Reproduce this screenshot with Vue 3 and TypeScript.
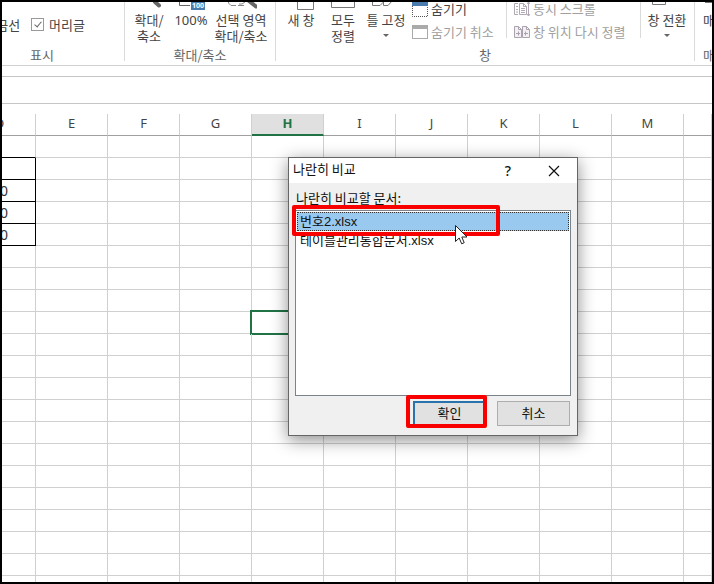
<script setup lang="ts">
import { ref } from 'vue'

const columns: string[] = ['D', 'E', 'F', 'G', 'H', 'I', 'J', 'K', 'L', 'M', '']
const rowCount = 21
const activeColumn = 'H'
const activeRow = 9
const values: Record<number, string> = { 2: '', 3: '0', 4: '0', 5: '0' }

const documents: string[] = ['번호2.xlsx', '테이블관리통합문서.xlsx']
const selected = ref(0)
const showHeadings = ref(true)

function cellClass(row: number, column: string) {
  return {
    boxed: column === 'D' && row in values,
    'above-box': column === 'D' && row === 1,
    active: column === activeColumn && row === activeRow,
  }
}
</script>

<template>
  <main class="frame">
    <header class="ribbon">
      <section class="group show">
        <div class="tools checks">
          <span>금선</span>
          <label class="check">
            <input v-model="showHeadings" type="checkbox" />
            <span>머리글</span>
          </label>
        </div>
        <div class="caption">표시</div>
      </section>

      <section class="group zoom">
        <div class="tools">
          <button class="tool">
            <svg width="32" height="10" viewBox="0 0 32 10"><path d="M22 0 L26 3.500" stroke="#666" stroke-width="4" stroke-linecap="round" /></svg>
            <span>확대/<br />축소</span>
          </button>
          <button class="tool">
            <svg width="32" height="10" viewBox="0 0 32 10">
              <path d="M4.500 0 V3.500 H15" fill="none" stroke="#666" />
              <rect x="16" y="0" width="14" height="8" fill="#4a7dae" />
              <text x="23" y="6" text-anchor="middle" class="badge">100</text>
            </svg>
            <span class="percent">100%</span>
          </button>
          <button class="tool wide">
            <svg width="32" height="10" viewBox="0 0 32 10">
              <path d="M3.500 0 V1 L6 3.500 H11 M13 3.500 H19 M14 2 H17 L20 0" fill="none" stroke="#888" />
              <path d="M24 -1 L31 4.500" stroke="#666" stroke-width="4" stroke-linecap="round" />
            </svg>
            <span>선택 영역<br />확대/축소</span>
          </button>
        </div>
        <div class="caption">확대/축소</div>
      </section>

      <section class="group window">
        <div class="tools">
          <button class="tool">
            <svg width="32" height="10" viewBox="0 0 32 10"><path d="M12.500 -1 V7.500 H28.500 V-1" fill="none" stroke="#777" /></svg>
            <span>새 창</span>
          </button>
          <button class="tool">
            <svg width="32" height="10" viewBox="0 0 32 10"><path d="M4.500 -1 V5.500 H27.500 V-1" fill="none" stroke="#777" /></svg>
            <span>모두<br />정렬</span>
          </button>
          <button class="tool freeze">
            <svg width="32" height="10" viewBox="0 0 32 10"><path d="M2.500 -1 V3.500 H10 L13.500 0 V3.500 H18 L22 -1" fill="none" stroke="#777" /></svg>
            <span>틀 고정</span>
            <i class="arrow"></i>
          </button>
          <div class="stack hide">
            <button class="line">
              <svg width="16" height="16" viewBox="0 0 16 16">
                <rect width="16" height="5" fill="#4a7dae" />
                <path d="M.5 5 V15.500 H15.500 V5" fill="none" stroke="#555" stroke-dasharray="1 1" />
              </svg>
              <span>숨기기</span>
            </button>
            <button class="line" disabled>
              <svg width="16" height="16" viewBox="0 0 16 16">
                <rect x=".5" y="1.500" width="15" height="13" fill="#fff" stroke="#aaa" />
                <rect y="1" width="16" height="4" fill="#aaa" />
              </svg>
              <span>숨기기 취소</span>
            </button>
          </div>
          <div class="stack sync">
            <button class="line" disabled>
              <svg width="16" height="16" viewBox="0 0 16 16" fill="none" stroke="#b0a8b4">
                <path d="M4 2.500 H.5 V13.500 H4 M2 5.500 H4 M2 8.500 H4 M2 11 H4" />
                <path d="M5.500 2.500 H9.500 L12.500 5.500 V13.500 H5.500 Z M9.500 2.500 V5.500 H12.500 M7 7.500 H11 M7 9.500 H11 M7 11.500 H11" />
                <path d="M14.500 1 V15 M13 13 L14.500 15 L16 13 M13 3 L14.500 1 L16 3" />
              </svg>
              <span>동시 스크롤</span>
            </button>
            <button class="line" disabled>
              <svg width="16" height="16" viewBox="0 0 16 16" fill="#f4eff5" stroke="#aaa2ae">
                <path d="M.5 2.500 H4.500 L7.500 5.500 V13.500 H.5 Z M4.500 2.500 V5.500 H7.500" />
                <path d="M8.500 2.500 H12.500 L15.500 5.500 V13.500 H8.500 Z M12.500 2.500 V5.500 H15.500" />
                <path d="M2 9.500 H6 M4.500 7.500 V11.500 M10 9.500 H14 M11.500 7.500 V11.500" />
              </svg>
              <span>창 위치 다시 정렬</span>
            </button>
          </div>
          <button class="tool switch">
            <svg width="32" height="10" viewBox="0 0 32 10"><path d="M1.500 -1 V2.500 H14.500 V-1" fill="none" stroke="#777" /></svg>
            <span>창 전환</span>
            <i class="arrow"></i>
          </button>
        </div>
        <div class="caption">창</div>
      </section>

      <section class="group macro">
        <div class="tools">
          <button class="tool">
            <svg width="12" height="10" viewBox="0 0 12 10"><path d="M2 .5 H12" stroke="#777" /></svg>
            <span>매</span>
          </button>
        </div>
        <div class="caption">매</div>
      </section>
    </header>

    <div class="gap"></div>
    <div class="formula"></div>

    <table class="sheet">
      <thead>
        <tr>
          <th v-for="c in columns" :key="c" :class="{ first: c === 'D', last: c === '', current: c === activeColumn }">{{ c }}</th>
        </tr>
      </thead>
      <tbody>
        <tr v-for="r in rowCount" :key="r">
          <td v-for="c in columns" :key="c" :class="cellClass(r, c)">{{ c === 'D' ? values[r] : '' }}</td>
        </tr>
      </tbody>
    </table>

    <section class="dialog" role="dialog" aria-labelledby="dialog-title">
      <div class="titlebar">
        <span id="dialog-title" class="title">나란히 비교</span>
        <button class="sys help">?</button>
        <button class="sys" aria-label="닫기">
          <svg width="12" height="12" viewBox="0 0 12 12"><path d="M1 1 L11 11 M11 1 L1 11" stroke="#111" stroke-width="1.200" /></svg>
        </button>
      </div>
      <div class="content">
        <div id="list-label" class="list-label">나란히 비교할 문서:</div>
        <ul class="list" role="listbox" aria-labelledby="list-label" tabindex="0">
          <li
            v-for="(name, i) in documents"
            :key="name"
            role="option"
            :aria-selected="i === selected"
            :class="{ selected: i === selected }"
            @click="selected = i"
          >{{ name }}</li>
        </ul>
        <div class="actions">
          <button class="push default">확인</button>
          <button class="push">취소</button>
        </div>
      </div>
      <div class="mark mark-item"></div>
      <div class="mark mark-ok"></div>
      <svg class="cursor" width="13" height="20" viewBox="0 0 13 20">
        <path d="M.5 .5 V16.500 L4.200 13 L6.700 18.800 L9.200 17.700 L6.800 12 H12 Z" fill="#fff" stroke="#222" />
      </svg>
    </section>
  </main>
</template>

<style>
body {
  margin: 0;
}
</style>

<style scoped>
.frame {
  position: relative;
  box-sizing: border-box;
  height: 100vh;
  overflow: hidden;
  border: 2px solid #000;
  background: #fff;
  color: #444;
  font: 13px/16px 'Noto Sans CJK KR', sans-serif;
}

button {
  padding: 0;
  border: 0;
  background: none;
  color: inherit;
  font: inherit;
}

svg {
  display: block;
  flex: none;
}

.ribbon {
  display: flex;
  height: 63px;
  overflow: hidden;
  border-bottom: 1px solid #d0d0d0;
  white-space: nowrap;
}

.group {
  display: flex;
  flex: none;
  flex-direction: column;
  box-sizing: border-box;
  height: 59px;
  border-right: 1px solid #dadada;
}

.tools {
  display: flex;
  flex: none;
  height: 45px;
}

.caption {
  text-align: center;
  color: #666;
}

.show {
  width: 165px;
  margin-left: -42px;
}

.checks {
  justify-content: flex-end;
  align-items: center;
  gap: 11px;
  padding-right: 39px;
}

.check {
  display: flex;
  align-items: center;
  gap: 5px;
}

.check input {
  position: relative;
  appearance: none;
  box-sizing: border-box;
  width: 13px;
  height: 13px;
  margin: 0;
  border: 1px solid #999;
  background: #fff;
}

.check input:checked::after {
  content: '';
  position: absolute;
  left: 4px;
  top: 1px;
  width: 3px;
  height: 6px;
  border: solid #666;
  border-width: 0 1px 1px 0;
  transform: rotate(40deg);
}

.zoom {
  width: 151px;
}

.zoom .tools {
  padding-left: 3px;
}

.window {
  width: 419px;
}

.window .tools {
  padding-left: 4px;
}

.tool {
  display: flex;
  flex: none;
  flex-direction: column;
  align-items: center;
  width: 42px;
}

.wide {
  width: 58px;
}

.percent {
  font-family: 'Noto Sans', sans-serif;
}

.badge {
  fill: #fff;
  font: bold 7px 'Open Sans', sans-serif;
}

.freeze {
  width: 44px;
}

.switch {
  width: 52px;
}

.arrow {
  margin-top: 6px;
  border: 3px solid transparent;
  border-top-color: #666;
  border-bottom: 0;
}

.stack {
  box-sizing: border-box;
  height: 36px;
  border-right: 1px solid #dadada;
}

.hide {
  width: 99px;
  padding-left: 4px;
}

.sync {
  width: 134px;
  padding-left: 7px;
}

.line {
  display: flex;
  align-items: center;
  gap: 3px;
  height: 23px;
}

.line:first-child {
  margin-top: -5px;
}

.line:disabled {
  color: #a0a0a0;
}

.macro {
  width: 60px;
  padding-left: 8px;
}

.macro .tool {
  align-items: flex-start;
}

.macro .caption {
  text-align: left;
}

.gap {
  height: 10px;
  border-bottom: 1px solid #c6c6c6;
}

.formula {
  height: 26px;
  margin-bottom: 10px;
  border-bottom: 1px solid #c6c6c6;
}

.sheet {
  width: 100%;
  table-layout: fixed;
  border-spacing: 0;
}

.sheet th,
.sheet td {
  position: relative;
  box-sizing: border-box;
  height: 22px;
  padding: 0;
  border-right: 1px solid #d0d0d0;
  border-bottom: 1px solid #d0d0d0;
}

.sheet th {
  width: 72px;
  padding-bottom: 3px;
  border-bottom-color: #a0a0a0;
  font: 13px/18px 'Noto Sans', sans-serif;
}

.sheet .first {
  width: 34px;
  text-indent: -38px;
}

.sheet .last {
  width: auto;
}

.sheet .current {
  padding-bottom: 2px;
  border-bottom: 2px solid #217346;
  background: #e0e0e0;
  color: #217346;
  font-weight: bold;
}

.sheet td {
  color: #333;
  font: 14px/20px 'Noto Sans', sans-serif;
}

.sheet .above-box {
  border-bottom-color: #000;
}

.sheet .boxed {
  border-color: #000;
  text-indent: -2px;
}

.active::after {
  content: '';
  position: absolute;
  inset: -2px;
  border: 2px solid #217346;
}

.dialog {
  position: absolute;
  left: 286px;
  top: 155px;
  box-sizing: border-box;
  width: 290px;
  border: 1px solid #666;
  background: #f0f0f0;
  box-shadow: 0 4px 16px rgba(0, 0, 0, 0.45);
  color: #111;
}

.titlebar {
  display: flex;
  align-items: center;
  height: 25px;
  padding-left: 4px;
  background: #fff;
}

.title {
  flex: 1;
  padding-bottom: 3px;
}

.sys {
  display: flex;
  align-items: center;
  justify-content: center;
  width: 46px;
  height: 25px;
}

.help {
  font: 500 14px/20px 'Noto Sans', sans-serif;
}

.content {
  padding: 7px 6px 9px;
}

.list-label {
  padding: 0 1px 4px;
}

.list {
  box-sizing: border-box;
  height: 186px;
  margin: 0 0 5px;
  padding: 1px;
  border: 1px solid #7a828a;
  background: #fff;
  font-family: 'Liberation Sans', 'Noto Sans CJK KR', sans-serif;
  list-style: none;
}

.list li {
  box-sizing: border-box;
  height: 19px;
  padding: 0 2px;
  border: 1px solid transparent;
  line-height: 18px;
}

.list .selected {
  border: 1px dotted #333;
  background: #99c9ef;
}

.actions {
  display: flex;
  justify-content: flex-end;
  gap: 11px;
  padding-right: 1px;
}

.push {
  box-sizing: border-box;
  width: 73px;
  height: 25px;
  padding-bottom: 2px;
  border: 1px solid #adadad;
  background: #e1e1e1;
}

.default {
  border: 2px solid #2a72ab;
}

.mark {
  position: absolute;
  box-sizing: border-box;
  border: 4px solid #f80000;
  border-radius: 2px;
  pointer-events: none;
}

.mark-item {
  left: 3px;
  top: 47px;
  width: 208px;
  height: 31px;
}

.mark-ok {
  left: 117px;
  top: 237px;
  width: 81px;
  height: 33px;
}

.cursor {
  position: absolute;
  left: 166px;
  top: 67px;
}
</style>
